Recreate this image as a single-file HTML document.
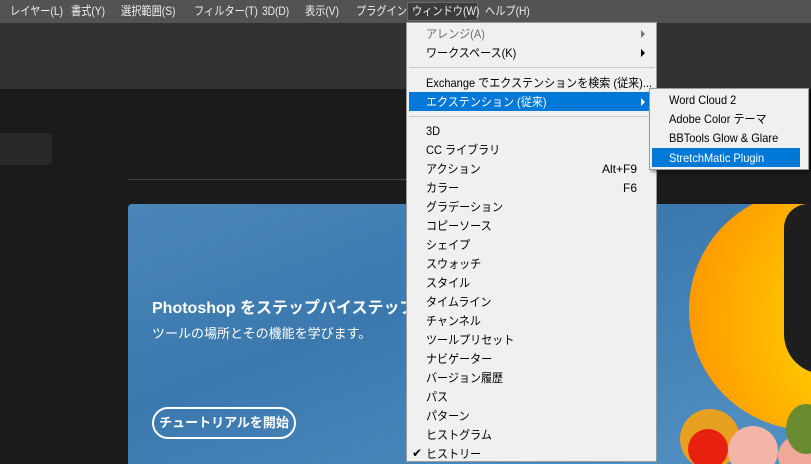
<!DOCTYPE html>
<html><head><meta charset="utf-8"><style>
*{margin:0;padding:0;box-sizing:border-box}
body{width:811px;height:456px;overflow:hidden;background:#1b1b1b;position:relative;font-family:"Liberation Sans","Noto Sans CJK JP",sans-serif;font-size:12px}
.mb{position:absolute;left:0;top:0;width:811px;height:23px;background:#535353;color:#eee}
.mb span{position:absolute;top:4px;white-space:nowrap;line-height:14px;transform:scaleX(0.85);transform-origin:left}
.tb{position:absolute;left:0;top:23px;width:811px;height:66px;background:#323232}
.box{position:absolute;left:-6px;top:133px;width:58px;height:32px;background:#282828;border-radius:4px}
.line{position:absolute;left:128px;top:179px;width:300px;height:1px;background:#444}
.card{position:absolute;left:128px;top:204px;width:700px;height:260px;border-radius:4px 0 0 0;overflow:hidden;background:linear-gradient(160deg,#4a86b8 0%,#3a78ae 40%,#5592c4 100%)}
.sun{position:absolute;left:561px;top:-14px;width:240px;height:240px;border-radius:50%;background:radial-gradient(circle at 85% 55%,#ffe400 0%,#ffc400 40%,#ff8a00 100%)}
.face{position:absolute;left:656px;top:0;width:40px;height:170px;background:#1e1e1e;border-radius:30px 0 0 50px}
.menu{position:absolute;left:406px;top:22px;width:251px;height:440px;background:#f0f0f0;border:1px solid #9a9a9a;color:#000}
.it{position:absolute;left:19px;white-space:nowrap;line-height:14px;transform:scaleX(0.92);transform-origin:left}
.sc{position:absolute;right:19px;line-height:14px}
.sep{position:absolute;left:2px;right:2px;height:1px;background:#c8c8c8}
.arr{position:absolute;left:234px;width:0;height:0;border-left:4px solid #000;border-top:4px solid transparent;border-bottom:4px solid transparent}
.sub{position:absolute;left:649px;top:88px;width:160px;height:82px;background:#f0f0f0;border:1px solid #9a9a9a;box-shadow:2px 2px 3px rgba(0,0,0,.4)}
</style></head><body>
<div class="mb">
<span style="left:10px">レイヤー(L)</span><span style="left:71px">書式(Y)</span><span style="left:121px">選択範囲(S)</span><span style="left:194px">フィルター(T)</span><span style="left:262px">3D(D)</span><span style="left:305px">表示(V)</span><span style="left:356px">プラグイン</span>
<div style="position:absolute;left:407px;top:2px;width:71px;height:19px;background:#3c3c3c;border:1px solid #6a6a6a"></div>
<span style="left:412px">ウィンドウ(W)</span><span style="left:485px">ヘルプ(H)</span>
</div>
<div class="tb"></div>
<div class="box"></div>
<div class="line"></div>
<div class="card"><div class="sun"></div><div class="face"></div>
<div style="position:absolute;left:552px;top:205px;width:60px;height:60px;border-radius:50%;background:#e8a020"></div>
<div style="position:absolute;left:560px;top:225px;width:40px;height:40px;border-radius:50%;background:#e82010"></div>
<div style="position:absolute;left:600px;top:222px;width:50px;height:50px;border-radius:50%;background:#f4b4a8"></div>
<div style="position:absolute;left:650px;top:232px;width:40px;height:40px;border-radius:50%;background:#f2a898"></div>
<div style="position:absolute;left:658px;top:200px;width:40px;height:50px;border-radius:50%;background:#6a8a30"></div>
<div style="position:absolute;left:24px;top:90px;color:#fff;font-size:16px;font-weight:bold;white-space:nowrap">Photoshop をステップバイステップで学</div>
<div style="position:absolute;left:24px;top:119px;color:#fff;font-size:13px;white-space:nowrap">ツールの場所とその機能を学びます。</div>
<div style="position:absolute;left:24px;top:203px;width:144px;height:32px;border:2px solid #fff;border-radius:16px;color:#fff;font-size:13px;font-weight:bold;text-align:center;line-height:28px">チュートリアルを開始</div>
</div>
<div class="menu">
<div class="it" style="top:4px;color:#6d6d6d">アレンジ(A)</div><div class="arr" style="top:7px;border-left-color:#777"></div>
<div class="it" style="top:23px">ワークスペース(K)</div><div class="arr" style="top:26px"></div>
<div class="sep" style="top:44px"></div>
<div class="it" style="top:53px">Exchange でエクステンションを検索 (従来)...</div>
<div style="position:absolute;left:2px;top:69px;width:245px;height:19px;background:#0078d7"></div>
<div class="it" style="top:72px;color:#fff">エクステンション (従来)</div><div class="arr" style="top:75px;border-left-color:#fff"></div>
<div class="sep" style="top:93px"></div>
<div class="it" style="top:101px">3D</div>
<div class="it" style="top:120px">CC ライブラリ</div>
<div class="it" style="top:139px">アクション</div><div class="sc" style="top:139px">Alt+F9</div>
<div class="it" style="top:158px">カラー</div><div class="sc" style="top:158px">F6</div>
<div class="it" style="top:177px">グラデーション</div>
<div class="it" style="top:196px">コピーソース</div>
<div class="it" style="top:215px">シェイプ</div>
<div class="it" style="top:234px">スウォッチ</div>
<div class="it" style="top:253px">スタイル</div>
<div class="it" style="top:272px">タイムライン</div>
<div class="it" style="top:291px">チャンネル</div>
<div class="it" style="top:310px">ツールプリセット</div>
<div class="it" style="top:329px">ナビゲーター</div>
<div class="it" style="top:348px">バージョン履歴</div>
<div class="it" style="top:367px">パス</div>
<div class="it" style="top:386px">パターン</div>
<div class="it" style="top:405px">ヒストグラム</div>
<div style="position:absolute;left:5px;top:423px">✔</div><div class="it" style="top:424px">ヒストリー</div>
</div>
<div class="sub">
<div class="it" style="top:4px">Word Cloud 2</div>
<div class="it" style="top:23px">Adobe Color テーマ</div>
<div class="it" style="top:42px">BBTools Glow &amp; Glare</div>
<div style="position:absolute;left:2px;top:59px;width:148px;height:19px;background:#0078d7"></div>
<div class="it" style="top:62px;color:#fff">StretchMatic Plugin</div>
</div>
</body></html>
